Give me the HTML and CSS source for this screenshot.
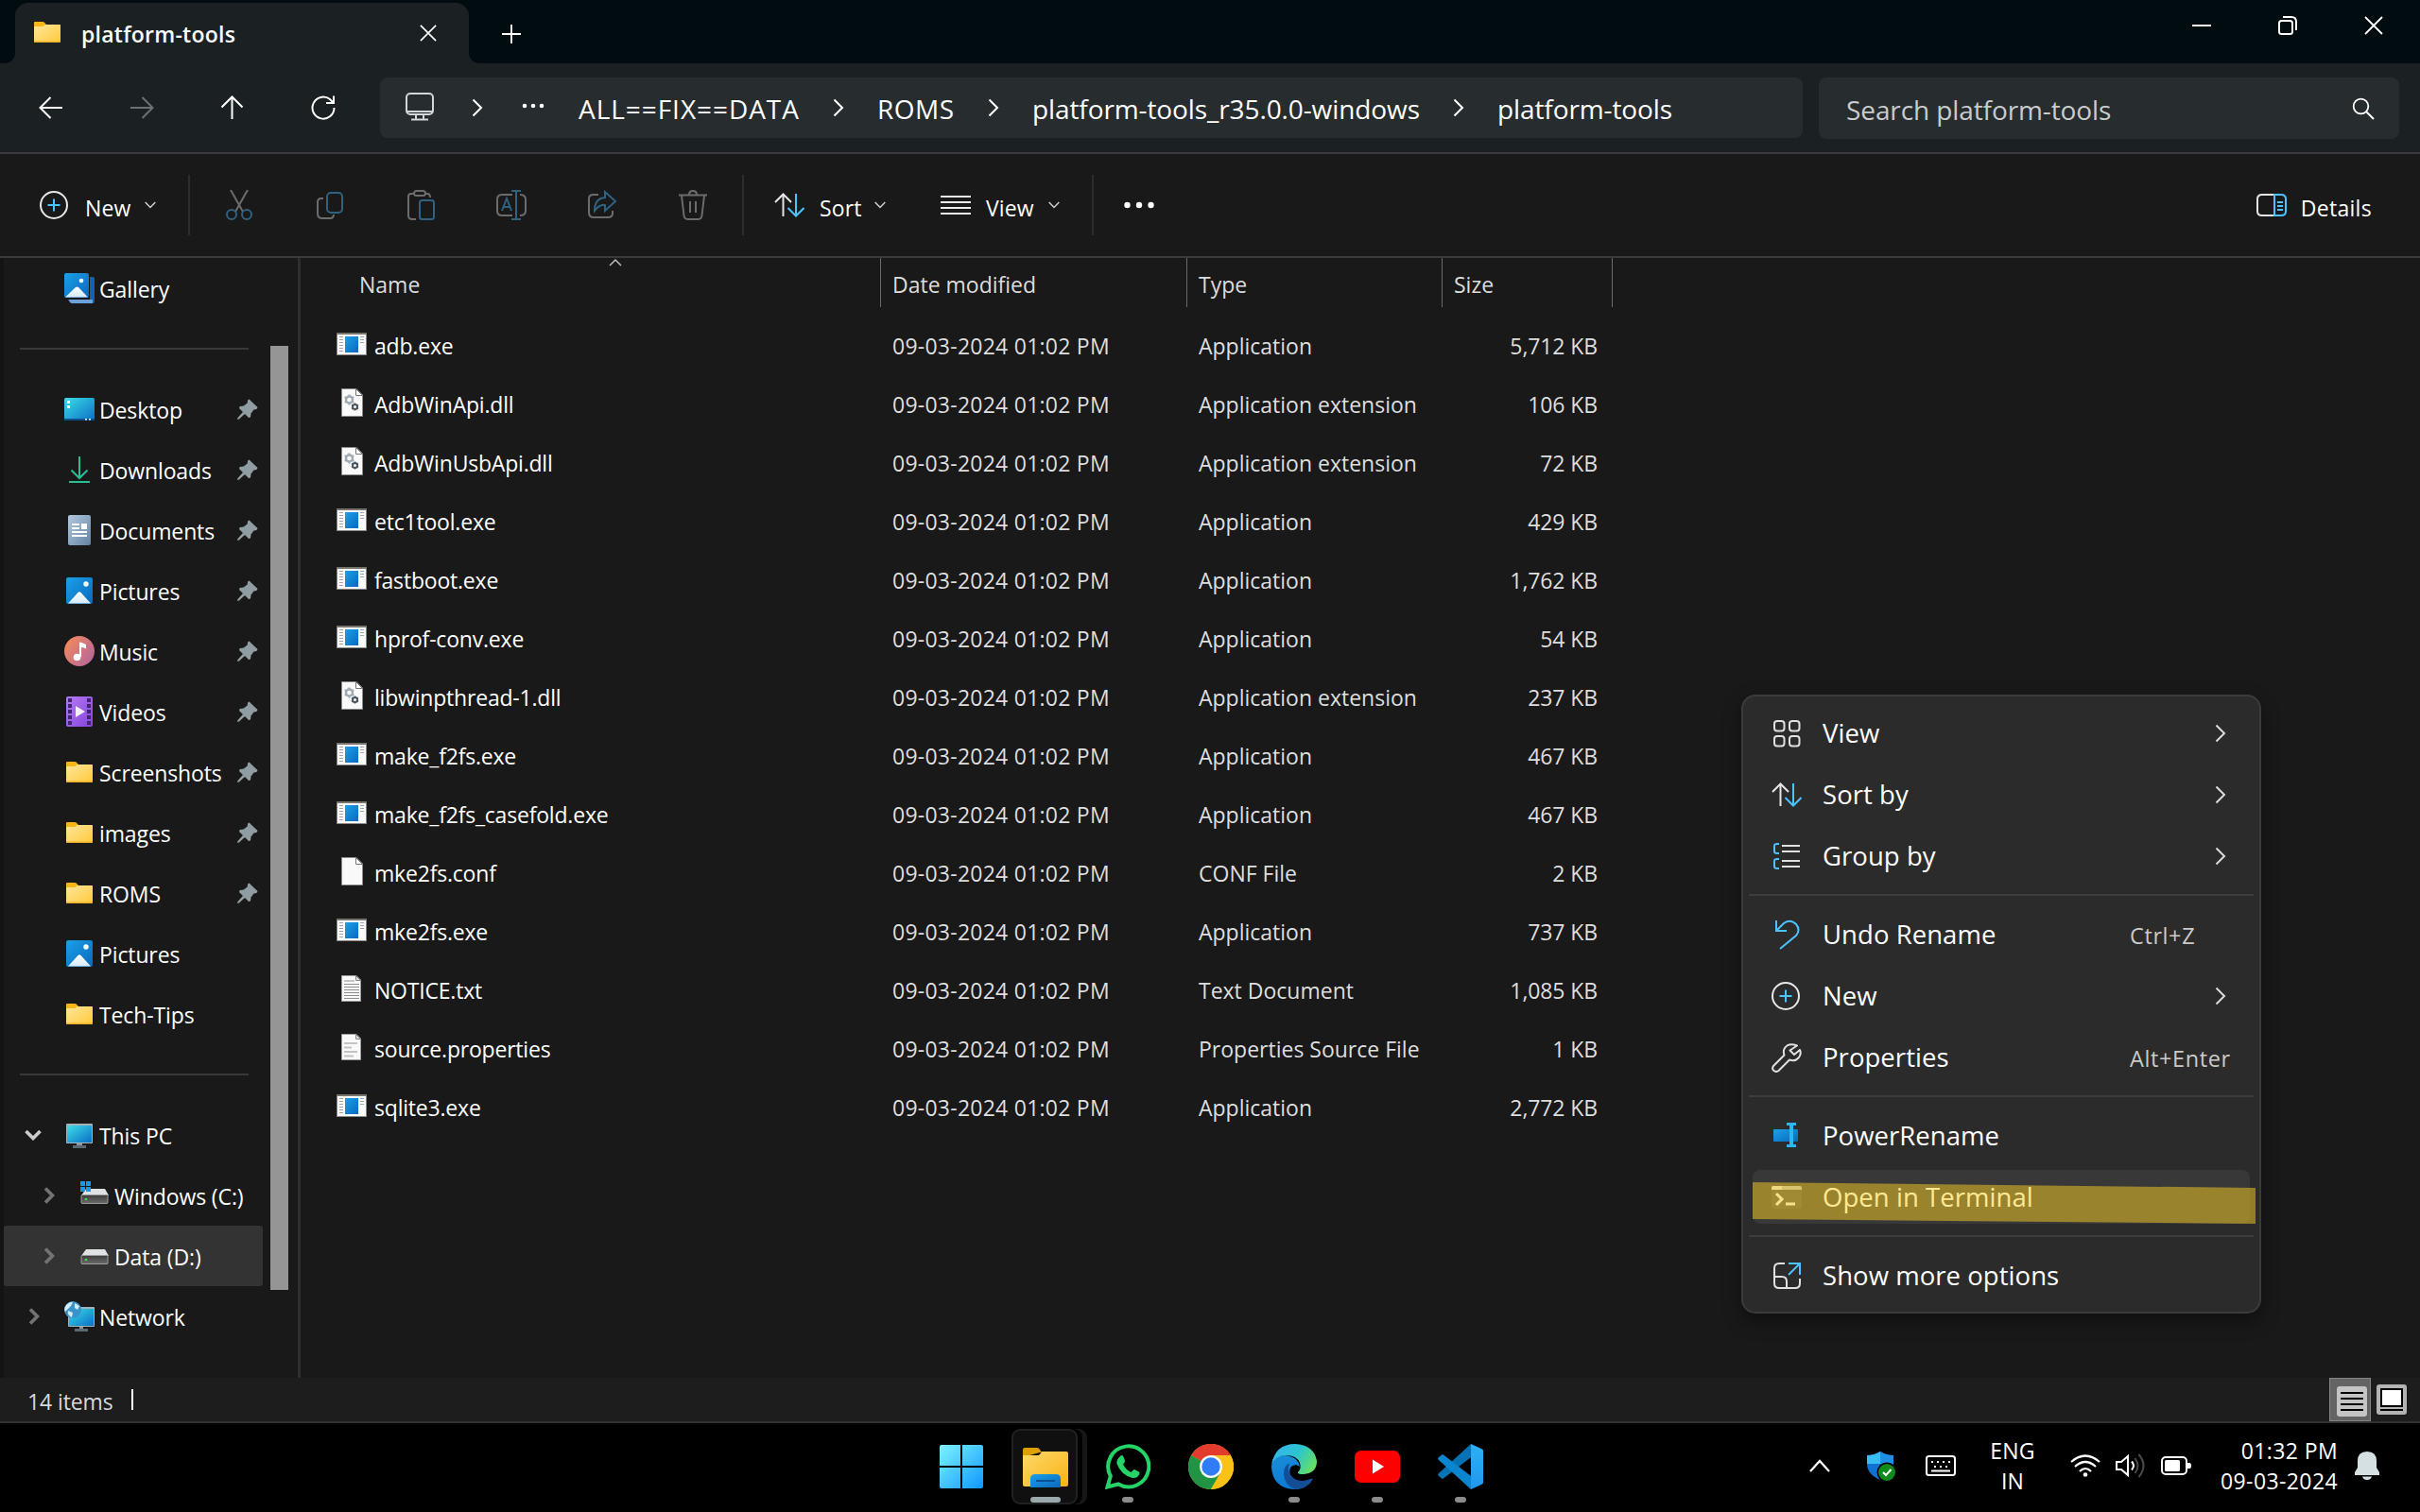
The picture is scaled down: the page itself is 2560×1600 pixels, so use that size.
FILE: index.html
```html
<!DOCTYPE html>
<html lang="en">
<head>
<meta charset="utf-8">
<title>platform-tools</title>
<link rel="stylesheet" href="styles.css">
</head>
<body>
<svg class="sprite" aria-hidden="true">
  <defs>
    <linearGradient id="gFolder" x1="0" y1="0" x2="1" y2="1"><stop offset="0" stop-color="#ffe79f"/><stop offset="1" stop-color="#ffc937"/></linearGradient>
    <linearGradient id="gBlue" x1="0" y1="0" x2="1" y2="1"><stop offset="0" stop-color="#1ba0e8"/><stop offset="1" stop-color="#0a68bd"/></linearGradient>
    <linearGradient id="gScreen" x1="0" y1="0" x2="1" y2="1"><stop offset="0" stop-color="#3ddde6"/><stop offset="1" stop-color="#0a6fc8"/></linearGradient>
    <linearGradient id="gSnow" x1="0" y1="0" x2="0" y2="1"><stop offset="0" stop-color="#fff"/><stop offset="1" stop-color="#d3e9fb"/></linearGradient>
    <linearGradient id="gDoc" x1="0" y1="0" x2="1" y2="1"><stop offset="0" stop-color="#b3c9de"/><stop offset="1" stop-color="#6583a6"/></linearGradient>
    <linearGradient id="gMusic" x1="0" y1="0.2" x2="1" y2="0.9"><stop offset="0" stop-color="#f48a5b"/><stop offset="1" stop-color="#b0649f"/></linearGradient>
    <linearGradient id="gVideo" x1="0" y1="0" x2="1" y2="1"><stop offset="0" stop-color="#b67bf2"/><stop offset="1" stop-color="#8442dc"/></linearGradient>
    <linearGradient id="gDrive" x1="0" y1="0" x2="0" y2="1"><stop offset="0" stop-color="#3c3c3c"/><stop offset="1" stop-color="#6b6b6b"/></linearGradient>
    <linearGradient id="gStart" x1="0" y1="0" x2="1" y2="1"><stop offset="0" stop-color="#7df4ff"/><stop offset="1" stop-color="#0f97ff"/></linearGradient>
    <linearGradient id="gBig" x1="0" y1="0" x2="1" y2="1"><stop offset="0" stop-color="#ffd96a"/><stop offset="1" stop-color="#f7b215"/></linearGradient>
    <linearGradient id="gEdgeTop" x1="0" y1="0.3" x2="1" y2="0.7"><stop offset="0" stop-color="#35b5ec"/><stop offset="0.5" stop-color="#2bc4cf"/><stop offset="1" stop-color="#6be25a"/></linearGradient>
    <linearGradient id="gEdgeMid" x1="0" y1="0" x2="0.5" y2="1"><stop offset="0" stop-color="#1b8fd8"/><stop offset="1" stop-color="#0b78d4"/></linearGradient>
    <linearGradient id="gCode" x1="0" y1="0" x2="0" y2="1"><stop offset="0" stop-color="#2cb0f5"/><stop offset="1" stop-color="#1f97ee"/></linearGradient>

    <symbol id="folder" viewBox="0 0 32 32"><path d="M2 6q0-1 1-1h8q2 0 3 2l1 1h13q2 0 2 1v4H2z" fill="#fbb615"/><path d="M2 10h9l3-2h15q1 0 1 1v16q0 2-1 2H3q-1 0-1-2z" fill="url(#gFolder)"/><path d="M2 25.500v.5q0 1 1 1h26q1 0 1-1v-.5z" fill="#eeb12a"/></symbol>
    <symbol id="picture" viewBox="0 0 32 32"><rect x="2" y="2" width="28" height="28" rx="2" fill="url(#gBlue)"/><path d="M4 29.500 14.500 18q1.500-1.500 3 0L28 29.500z" fill="url(#gSnow)"/><circle cx="23" cy="9" r="2.700" fill="#fff"/></symbol>
    <symbol id="gallery" viewBox="0 0 32 32"><path d="M6 27h21V4h3q2 0 2 2v24q0 2-2 2H8q-2 0-3-3z" fill="#1262b3"/><path d="M4 28h26v4H8q-2 0-3-3z" fill="#6aa2da"/><rect width="27" height="28" fill="#191919"/><rect width="26" height="26" rx="2" fill="url(#gBlue)"/><path d="M1 25.500 12 15q1.500-1 3 0l10 10.500z" fill="url(#gSnow)"/><circle cx="18" cy="8" r="2.300" fill="#fff"/></symbol>
    <symbol id="desktop" viewBox="0 0 32 32"><rect y="4" width="32" height="24" rx="1.500" fill="url(#gScreen)"/><path d="M0 26h32v.5q0 1.500-1.500 1.500h-29Q0 28 0 26.500z" fill="#0a4f8c"/><path d="M3 7h3v3H3zm0 5h3v3H3zM22 26h2v1.500h-2zm4 0h2v1.500h-2z" fill="#fff"/></symbol>
    <symbol id="download" viewBox="0 0 32 32"><g fill="none" stroke="#2dbd96" stroke-width="2"><path d="M16 2v23M7.500 16.500 16 25l8.500-8.500"/><path d="M5 29h22"/></g></symbol>
    <symbol id="document" viewBox="0 0 32 32"><rect x="4" width="24" height="32" rx="2" fill="url(#gDoc)"/><path d="M8 9h8v2H8zm0 4h8v2H8zm10-4h6v6h-6zM8 17h16v2H8zm0 4h16v2H8z" fill="#fff"/></symbol>
    <symbol id="music" viewBox="0 0 32 32"><circle cx="16" cy="16" r="16" fill="url(#gMusic)"/><circle cx="13.500" cy="22.500" r="3.800" fill="#fff"/><path d="M16 6.500q3 0 7 2.500v4.500q-3-2-5-1.500v10h-2z" fill="#fff"/></symbol>
    <symbol id="video" viewBox="0 0 32 32"><rect x="2" width="28" height="32" rx="2" fill="url(#gVideo)"/><path d="M4 2h4v4H4zm0 6h4v4H4zm0 6h4v4H4zm0 6h4v4H4zm0 6h4v4H4zM24 2h4v4h-4zm0 6h4v4h-4zm0 6h4v4h-4zm0 6h4v4h-4zm0 6h4v4h-4z" fill="#3f2470"/><path d="M12 10v12l10-6z" fill="#f3ecfd"/></symbol>
    <symbol id="pc" viewBox="0 0 32 32"><path d="M13 24h6v4h-6z" fill="#8a96a0"/><path d="M9 27h14v3H9z" fill="#5b6974"/><rect x="2" y="4" width="28" height="21" rx="1" fill="#a5b0b8"/><path d="M3 6h26v18H3z" fill="url(#gScreen)"/></symbol>
    <symbol id="drive" viewBox="0 0 32 32"><path d="M7 9h20l4 7H2z" fill="#dfe1e5"/><rect x="2" y="15.500" width="28" height="9" rx="1" fill="url(#gDrive)" stroke="#9c9c9c"/><circle cx="7" cy="20" r="1.300" fill="#35e342"/></symbol>
    <symbol id="osdrive" viewBox="0 0 32 32"><path d="M7 9h20l4 7H2z" fill="#dfe1e5"/><rect x="2" y="15.500" width="28" height="9" rx="1" fill="url(#gDrive)" stroke="#9c9c9c"/><circle cx="7" cy="20" r="1.300" fill="#35e342"/><path d="M1 1h5v5H1zm6 0h5v5H7zM1 7h5v5H1zm6 0h5v5H7z" fill="#1d97e8"/></symbol>
    <symbol id="network" viewBox="0 0 32 32"><path d="M16 27h4v3h-4z" fill="#8a96a0"/><path d="M11 29h14v3H11z" fill="#5b6974"/><rect x="4" y="6" width="28" height="21" rx="1" fill="#a5b0b8"/><path d="M5 8h26v18H5z" fill="url(#gScreen)"/><circle cx="9" cy="9" r="9" fill="#3b93cb"/><path d="M2 4q4-4 7-3l-2 4-4 4-2 2Q-1 8 2 4zm9-2 5 3-2 4-3-2zM4 10l5 2-1 5q-5-2-4-7z" fill="#d3edf8"/></symbol>
    <symbol id="pin" viewBox="0 0 22 22"><path d="M12.500 0.500 21.500 9l-1 2-3 .5-3 4-.5 4-2 .5-4-4L2 21.500 0 22l.5-2L6 14l-4-4 .7-2 4-.5 4-3L11 1.500z" fill="#929ca3"/></symbol>

    <symbol id="exe" viewBox="0 0 32 32"><rect x=".5" y="4.500" width="31" height="23" fill="#fafafa" stroke="#8a8884"/><path d="M0 4h32v2H0z" fill="#77746e"/><rect x="9" y="8" width="14" height="17" fill="url(#gBlue)"/><path d="M3 8.500h4M3 11.500h4M3 14.500h4M3 17.500h4M3 20.500h4M3 23.500h4M25 8.500h4M25 11.500h4M25 14.500h4" stroke="#a0a4a8" /></symbol>
    <symbol id="blank" viewBox="0 0 32 32"><path d="M5.500 1.500H21l6.500 6.500v22.500h-22z" fill="#f9f9f9" stroke="#8d8d8d"/><path d="M20.500 1.500v7h7z" fill="#fff" stroke="#777"/></symbol>
    <symbol id="dll" viewBox="0 0 32 32"><use href="#blank"/><circle cx="13.500" cy="13" r="3.500" fill="none" stroke="#9fabb4" stroke-width="2.500"/><path d="M13.500 7.500v11M8.700 10.200l9.600 5.600M8.700 15.800l9.600-5.600" stroke="#9fabb4" stroke-width="2"/><circle cx="13.500" cy="13" r="2.300" fill="#f9f9f9"/><circle cx="19.500" cy="20.500" r="2.500" fill="none" stroke="#4d565d" stroke-width="2"/><path d="M19.500 16.500v8M16 18.500l7 4M16 22.500l7-4" stroke="#4d565d" stroke-width="1.500"/><circle cx="19.500" cy="20.500" r="1.500" fill="#f9f9f9"/></symbol>
    <symbol id="txt" viewBox="0 0 32 32"><path d="M5.500 2.500H21l4.500 4.500v22.500h-20z" fill="#f9f9f9" stroke="#9d9d9d"/><path d="M20.500 2.500v5h5z" fill="#e2e2e2" stroke="#888"/><path d="M8 8h11M8 11.500h16M8 14.500h16M8 17.500h16M8 20.500h16M8 23.500h16M8 26.500h16" stroke="#8f8f8f"/></symbol>
    <symbol id="prop" viewBox="0 0 32 32"><path d="M5.500 2.500H21l4.500 4.500v22.500h-20z" fill="#f9f9f9" stroke="#9d9d9d"/><path d="M20.500 2.500v5h5z" fill="#e2e2e2" stroke="#888"/><path d="M8 12h14M8 16.500h8M8 21h14M8 25.500h10" stroke="#c3c3c3" stroke-width="2"/></symbol>

    <symbol id="chevR" viewBox="0 0 12 20"><path d="M1.500 1.500 10 10l-8.500 8.500" fill="none" stroke="currentColor" stroke-width="2"/></symbol>
    <symbol id="chevD" viewBox="0 0 12 8"><path d="M.7 1 6 6.500 11.300 1" fill="none" stroke="#cfcfcf" stroke-width="1.500"/></symbol>
    <symbol id="treeR" viewBox="0 0 12 18"><path d="M2 1.500 9.500 9 2 16.500" fill="none" stroke="currentColor" stroke-width="3.600"/></symbol>
    <symbol id="treeD" viewBox="0 0 18 12"><path d="M1.500 2 9 9.500 16.500 2" fill="none" stroke="currentColor" stroke-width="3.600"/></symbol>
    <symbol id="cross" viewBox="0 0 20 20"><path d="m1 1 18 18M19 1 1 19" fill="none" stroke="#fff" stroke-width="1.800"/></symbol>
    <symbol id="newi" viewBox="0 0 32 32"><circle cx="15" cy="16" r="14" fill="none" stroke="#e8e8e8" stroke-width="2"/><path d="M15 9.500v13M8.500 16h13" stroke="#4cc2ff" stroke-width="2"/></symbol>
    <symbol id="sort" viewBox="0 0 32 32"><path d="M9.500 28V5M1 13l8.500-8.500L18 13" fill="none" stroke="#e4e4e4" stroke-width="2"/><path d="M23 4v23M14.500 19l8.500 8.500 8.500-8.500" fill="none" stroke="#4cc2ff" stroke-width="2"/></symbol>
  </defs>
</svg>

<header class="titlebar">
  <div class="tab">
    <svg class="i32 tab-icon"><use href="#folder"/></svg>
    <span class="tab-title">platform-tools</span>
    <svg class="tab-close"><use href="#cross"/></svg>
  </div>
  <svg class="tab-new" viewBox="0 0 20 20"><path d="M10 0v20M0 10h20" stroke="#fff" stroke-width="1.800"/></svg>
  <div class="winctl">
    <svg viewBox="0 0 20 20"><path d="M0 10h20" stroke="#fff" stroke-width="2"/></svg>
    <svg viewBox="0 0 20 20"><rect x="1" y="5" width="14" height="14" rx="2.500" fill="none" stroke="#fff" stroke-width="2"/><path d="M5 1h9q5 0 5 5v9" fill="none" stroke="#fff" stroke-width="2"/></svg>
    <svg><use href="#cross"/></svg>
  </div>
</header>

<nav class="navbar">
  <div class="navbtns">
    <svg class="i32" viewBox="0 0 32 32"><path d="M28 16H5M15.500 5 4.500 16l11 11" fill="none" stroke="#fff" stroke-width="2"/></svg>
    <svg class="i32" viewBox="0 0 32 32"><path d="M4 16h23M16.500 5l11 11-11 11" fill="none" stroke="#6d7173" stroke-width="2"/></svg>
    <svg class="i32" viewBox="0 0 32 32"><path d="M15.500 28V5M4.500 15.500l11-11 11 11" fill="none" stroke="#fff" stroke-width="2"/></svg>
    <svg class="i32" viewBox="0 0 32 32"><path d="M27.500 16A11.500 11.500 0 1 1 23 7l3.500 3.500M27 3.500V11h-8" fill="none" stroke="#fff" stroke-width="2"/></svg>
  </div>
  <div class="address">
    <svg class="i32 monitor" viewBox="0 0 32 32"><g fill="none" stroke="#d3d6d7" stroke-width="2"><rect x="2" y="2" width="28" height="22" rx="4"/><path d="M2 21h28M12 25v4M20 25v4M7 29.500h18"/></g></svg>
    <svg class="crumb-sep first"><use href="#chevR"/></svg>
    <svg class="crumb-dots" viewBox="0 0 24 6"><g fill="#fff"><circle cx="3" cy="3" r="2.300"/><circle cx="12" cy="3" r="2.300"/><circle cx="21" cy="3" r="2.300"/></g></svg>
    <span class="crumb c-all">ALL==FIX==DATA</span><svg class="crumb-sep"><use href="#chevR"/></svg>
    <span class="crumb c-roms">ROMS</span><svg class="crumb-sep"><use href="#chevR"/></svg>
    <span class="crumb c-rel">platform-tools_r35.0.0-windows</span><svg class="crumb-sep"><use href="#chevR"/></svg>
    <span class="crumb">platform-tools</span>
  </div>
  <div class="search">
    <span>Search platform-tools</span>
    <svg viewBox="0 0 24 24"><circle cx="9.500" cy="9.500" r="7.800" fill="none" stroke="#fff" stroke-width="1.800"/><path d="m15 15 8 8" stroke="#fff" stroke-width="2"/></svg>
  </div>
</nav>

<div class="toolbar">
  <div class="tool t-new"><svg class="i32"><use href="#newi"/></svg><span>New</span><svg class="caret"><use href="#chevD"/></svg></div>
  <div class="tools-dim">
    <svg class="i32" viewBox="0 0 32 32" fill="none" stroke="#6c6c6c" stroke-width="2"><path d="M7 0l13 23M25 0 12 23"/><g stroke="#2f6280"><circle cx="8" cy="26" r="5"/><circle cx="24" cy="26" r="5"/></g></svg>
    <svg class="i32" viewBox="0 0 32 32" fill="none" stroke="#6c6c6c" stroke-width="2"><path d="M9 9H7q-4 0-4 4v12q0 5 5 5h8q4 0 4-4"/><rect x="13" y="3" width="16" height="21" rx="4" stroke="#2f6280"/></svg>
    <svg class="i32" viewBox="0 0 32 32" fill="none" stroke="#6c6c6c" stroke-width="2"><path d="M9 4H6Q3 4 3 7v20q0 4 4 4h4M21 4h2q3 0 3 4"/><rect x="9" y="1" width="12" height="5" rx="2.500"/><rect x="15" y="11" width="15" height="20" rx="2.500" stroke="#2f6280"/></svg>
    <svg class="i32" viewBox="0 0 32 32" fill="none" stroke="#6c6c6c" stroke-width="2"><path d="M17 5H6Q1 5 1 10v12q0 5 5 5h11M25 5q6 0 6 5v12q0 5-6 5"/><g stroke="#2f6280"><path d="M21 1v30M16 1h10M16 31h10M6 22l5-13 5 13M8 18h7"/></g></svg>
    <svg class="i32" viewBox="0 0 32 32" fill="none" stroke="#6c6c6c" stroke-width="2"><path d="M12 5H7Q2 5 2 9v15q0 5 5 5h15q5 0 5-4v-3"/><path d="M19 2v6q-11 1-11 14 5-7 11-6v6l11-10z" stroke="#2f6280"/></svg>
    <svg class="i32" viewBox="0 0 32 32" fill="none" stroke="#6c6c6c" stroke-width="2"><path d="M1 5.500h30M12 5q0-4 4-4t4 4M4 6l2.500 21q.5 4 4 4h11q3.500 0 4-4L28 6M13 12v12M19 12v12"/></svg>
  </div>
  <div class="tool t-sort"><svg class="i32"><use href="#sort"/></svg><span>Sort</span><svg class="caret"><use href="#chevD"/></svg></div>
  <div class="tool t-view"><svg class="i32" viewBox="0 0 32 32"><path d="M0 7h32M0 13h32M0 19h32M0 25h32" stroke="#ececec" stroke-width="2"/></svg><span>View</span><svg class="caret"><use href="#chevD"/></svg></div>
  <svg class="more" viewBox="0 0 32 8"><g fill="#fff"><circle cx="3.500" cy="4" r="3.200"/><circle cx="16" cy="4" r="3.200"/><circle cx="28.500" cy="4" r="3.200"/></g></svg>
  <div class="tool t-details"><svg class="i32" viewBox="0 0 32 32" fill="none" stroke-width="2"><path d="M19 5H6Q1 5 1 9.500v13Q1 27 6 27h13" stroke="#e4e4e4"/><path d="M19 5h7q5 0 5 4.500v13q0 4.500-5 4.500h-7zM22 13h6M22 17h6M22 21h6" stroke="#4cc2ff"/></svg><span>Details</span></div>
</div>

<main class="body">
  <aside class="side">
    <div class="tree">
      <div class="node"><svg class="i32"><use href="#gallery"/></svg><span>Gallery</span></div>
      <div class="rule"></div>
      <div class="node"><svg class="i32"><use href="#desktop"/></svg><span>Desktop</span><svg class="pin"><use href="#pin"/></svg></div>
      <div class="node"><svg class="i32"><use href="#download"/></svg><span>Downloads</span><svg class="pin"><use href="#pin"/></svg></div>
      <div class="node"><svg class="i32"><use href="#document"/></svg><span>Documents</span><svg class="pin"><use href="#pin"/></svg></div>
      <div class="node"><svg class="i32"><use href="#picture"/></svg><span>Pictures</span><svg class="pin"><use href="#pin"/></svg></div>
      <div class="node"><svg class="i32"><use href="#music"/></svg><span>Music</span><svg class="pin"><use href="#pin"/></svg></div>
      <div class="node"><svg class="i32"><use href="#video"/></svg><span>Videos</span><svg class="pin"><use href="#pin"/></svg></div>
      <div class="node"><svg class="i32"><use href="#folder"/></svg><span>Screenshots</span><svg class="pin"><use href="#pin"/></svg></div>
      <div class="node"><svg class="i32"><use href="#folder"/></svg><span>images</span><svg class="pin"><use href="#pin"/></svg></div>
      <div class="node"><svg class="i32"><use href="#folder"/></svg><span>ROMS</span><svg class="pin"><use href="#pin"/></svg></div>
      <div class="node"><svg class="i32"><use href="#picture"/></svg><span>Pictures</span></div>
      <div class="node"><svg class="i32"><use href="#folder"/></svg><span>Tech-Tips</span></div>
      <div class="rule"></div>
      <div class="node root"><svg class="twist open"><use href="#treeD"/></svg><svg class="i32"><use href="#pc"/></svg><span>This PC</span></div>
      <div class="node child"><svg class="twist"><use href="#treeR"/></svg><svg class="i32"><use href="#osdrive"/></svg><span>Windows (C:)</span></div>
      <div class="node child selected"><svg class="twist"><use href="#treeR"/></svg><svg class="i32"><use href="#drive"/></svg><span>Data (D:)</span></div>
      <div class="node root"><svg class="twist"><use href="#treeR"/></svg><svg class="i32"><use href="#network"/></svg><span>Network</span></div>
    </div>
    <div class="scroll"></div>
  </aside>
  <section class="files">
    <div class="head"><span class="h-name">Name<svg class="sorted" viewBox="0 0 14 8"><path d="M1 7 7 1l6 6" fill="none" stroke="#bbb" stroke-width="1.500"/></svg></span><span>Date modified</span><span>Type</span><span>Size</span></div>
    <div class="row"><svg class="i32"><use href="#exe"/></svg><span>adb.exe</span><span>09-03-2024 01:02 PM</span><span>Application</span><span>5,712 KB</span></div>
    <div class="row"><svg class="i32"><use href="#dll"/></svg><span>AdbWinApi.dll</span><span>09-03-2024 01:02 PM</span><span>Application extension</span><span>106 KB</span></div>
    <div class="row"><svg class="i32"><use href="#dll"/></svg><span>AdbWinUsbApi.dll</span><span>09-03-2024 01:02 PM</span><span>Application extension</span><span>72 KB</span></div>
    <div class="row"><svg class="i32"><use href="#exe"/></svg><span>etc1tool.exe</span><span>09-03-2024 01:02 PM</span><span>Application</span><span>429 KB</span></div>
    <div class="row"><svg class="i32"><use href="#exe"/></svg><span>fastboot.exe</span><span>09-03-2024 01:02 PM</span><span>Application</span><span>1,762 KB</span></div>
    <div class="row"><svg class="i32"><use href="#exe"/></svg><span>hprof-conv.exe</span><span>09-03-2024 01:02 PM</span><span>Application</span><span>54 KB</span></div>
    <div class="row"><svg class="i32"><use href="#dll"/></svg><span>libwinpthread-1.dll</span><span>09-03-2024 01:02 PM</span><span>Application extension</span><span>237 KB</span></div>
    <div class="row"><svg class="i32"><use href="#exe"/></svg><span>make_f2fs.exe</span><span>09-03-2024 01:02 PM</span><span>Application</span><span>467 KB</span></div>
    <div class="row"><svg class="i32"><use href="#exe"/></svg><span>make_f2fs_casefold.exe</span><span>09-03-2024 01:02 PM</span><span>Application</span><span>467 KB</span></div>
    <div class="row"><svg class="i32"><use href="#blank"/></svg><span>mke2fs.conf</span><span>09-03-2024 01:02 PM</span><span>CONF File</span><span>2 KB</span></div>
    <div class="row"><svg class="i32"><use href="#exe"/></svg><span>mke2fs.exe</span><span>09-03-2024 01:02 PM</span><span>Application</span><span>737 KB</span></div>
    <div class="row"><svg class="i32"><use href="#txt"/></svg><span>NOTICE.txt</span><span>09-03-2024 01:02 PM</span><span>Text Document</span><span>1,085 KB</span></div>
    <div class="row"><svg class="i32"><use href="#prop"/></svg><span>source.properties</span><span>09-03-2024 01:02 PM</span><span>Properties Source File</span><span>1 KB</span></div>
    <div class="row"><svg class="i32"><use href="#exe"/></svg><span>sqlite3.exe</span><span>09-03-2024 01:02 PM</span><span>Application</span><span>2,772 KB</span></div>
  </section>
</main>

<div class="status">
  <span>14 items</span><i class="bar"></i>
  <div class="modes">
    <div class="mode on"><svg class="i32" viewBox="0 0 32 32"><rect width="32" height="32" rx="3" fill="#c4c4c4"/><path d="M4 7h24M4 13h24M4 19h24M4 25h24" stroke="#000" stroke-width="2"/></svg></div>
    <svg class="i32 big" viewBox="0 0 32 32"><rect width="32" height="32" rx="3" fill="#b4b4b4"/><rect x="5" y="5" width="22" height="18" fill="#fff" stroke="#000" stroke-width="2"/><path d="M4 27h24" stroke="#000" stroke-width="2"/></svg>
  </div>
</div>

<footer class="taskbar">
  <div class="apps">
    <div class="app"><svg viewBox="0 0 48 48"><g fill="url(#gStart)"><path d="M3 1h20v22H1V3q0-2 2-2zM25 1h20q2 0 2 2v20H25zM1 25h22v22H3q-2 0-2-2zM25 25h22v20q0 2-2 2H25z"/></g></svg></div>
    <div class="app active"><svg viewBox="0 0 48 48"><path d="M0 6q0-2 2-2h13q2 0 3 2l2 3h-2L0 14z" fill="#dfa006"/><path d="M0 12h16q2 0 4-4h26q2 0 2 2v33q0 2-2 2H2q-2 0-2-2z" fill="url(#gBig)"/><path d="M8 46V37q0-5 5-5h22q5 0 5 5v9z" fill="url(#gBlue)"/><path d="M14 39h20" stroke="#084f94" stroke-width="2"/></svg><i class="ind wide"></i></div>
    <div class="app"><svg viewBox="0 0 48 48"><path d="M2.500 45.500 5.800 34A21.500 21.500 0 1 1 14 42.500z" fill="none" stroke="#25d366" stroke-width="4"/><path d="M16 13q1-1.500 3-.5l2 5q.5 1.500-2 4 3 6 8.500 8.500 2.500-3 3.500-3l5 2.500q1 .5 0 3-2 4-7 3.500Q17 33 12.500 21q-.5-5 3.500-8z" fill="#25d366"/></svg><i class="ind"></i></div>
    <div class="app"><svg viewBox="0 0 48 48"><circle cx="24" cy="24" r="24" fill="#fbc116"/><path d="M24 24 3.200 12A24 24 0 0 1 44.800 12z" fill="#e33b2e"/><path d="M24 24 3.200 12A24 24 0 0 0 24 48L34.400 30z" fill="#219345"/><path d="M24 12h20.800A24 24 0 0 1 24 48l10.400-18z" fill="#fbc116"/><circle cx="24" cy="24" r="12" fill="#fff"/><circle cx="24" cy="24" r="9.700" fill="#2f7cf6"/></svg></div>
    <div class="app"><svg viewBox="0 0 48 48"><path d="M0 24Q1 12 14 12q14 1 16 12l-4-2q-9 1-6 11 3 11 15 9 5-1 8-4-7 11-20 10Q1 46 0 24z" fill="url(#gEdgeMid)"/><path d="M13 32q0-9 6-12-3 10 3 15 7 6 16 3 5-2 6-1-5 10-19 11-11-4-12-16z" fill="#124d96"/><path d="M0 22Q4 0 25 0q20 1 23 18 0 13-14 14-7 0-6-2 4-4 2-10-3-8-15-8Q4 12 0 22z" fill="url(#gEdgeTop)"/></svg><i class="ind"></i></div>
    <div class="app"><svg viewBox="0 0 48 48"><rect y="7" width="48" height="34" rx="7" fill="#f00"/><path d="M19 16.500v15L31 24z" fill="#fff"/></svg><i class="ind"></i></div>
    <div class="app"><svg viewBox="0 0 48 48"><path d="M0 33q0-1 1-2L35 0v14L6 36.500q-1 .5-2 0z" fill="#0572b5"/><path d="M0 15q0 1 1 2l34 31V34L6 11.500q-1-.5-2 0z" fill="#0a86d1"/><path d="M35 0l12 5.500q1 .5 1 2v33q0 1.500-1 2L35 48z" fill="url(#gCode)"/></svg><i class="ind"></i></div>
  </div>
  <div class="tray">
    <svg class="up" viewBox="0 0 22 14"><path d="M1 13 11 2l10 11" fill="none" stroke="#fff" stroke-width="2.200"/></svg>
    <svg class="i32 shield" viewBox="0 0 32 32"><path d="M14 1q6 4 14 4v9q0 11-14 17Q0 25 0 14V5q8 0 14-4z" fill="#0d72d1"/><path d="M14 1v13H0V5q8 0 14-4z" fill="#38bdf2"/><path d="M14 1q6 4 14 4v9H14z" fill="#1f8fe3"/><circle cx="21" cy="23" r="10.500" fill="#000"/><circle cx="21" cy="23" r="9" fill="#0f8a1c"/><path d="m17 23 3 3 5.500-6" fill="none" stroke="#fff" stroke-width="2"/></svg>
    <svg class="i32 kbd" viewBox="0 0 32 32"><rect x="1" y="6" width="30" height="20" rx="2.500" fill="none" stroke="#fff" stroke-width="2"/><path d="M6 12h2m4 0h2m4 0h2m4 0h2M9 17h2m4 0h2m4 0h2M6 21.500h20" stroke="#fff" stroke-width="2"/></svg>
    <div class="lang">ENG<br>IN</div>
    <svg class="i32 wifi" viewBox="0 0 32 32" fill="none" stroke="#fff" stroke-width="2.200"><path d="M1 12q15-13 30 0M5 17q11-10 22 0M10 22q6-6 12 0"/><circle cx="16" cy="25.500" r="2.300" fill="#fff" stroke="none"/></svg>
    <svg class="i32 vol" viewBox="0 0 32 32" fill="none" stroke="#fff" stroke-width="2"><path d="M1 12v8h5l7 6V6l-7 6z"/><path d="M17 11.500q4 4.500 0 9"/><path d="M20.500 8q6 8 0 16M24.500 4q10 12 0 24" stroke="#4a4a4a"/></svg>
    <svg class="i32 bat" viewBox="0 0 32 32"><rect x="1" y="7" width="26" height="18" rx="4" fill="none" stroke="#fff" stroke-width="2"/><rect x="4" y="10" width="16" height="12" rx="1.500" fill="#fff"/><path d="M28 13h2q2 0 2 3t-2 3h-2z" fill="#fff"/></svg>
    <div class="clock">01:32 PM<br>09-03-2024</div>
    <svg class="bell" viewBox="0 0 26 30"><path d="M13 0q10 0 10 10v7l3 5v3H0v-3l3-5v-7Q3 0 13 0zM8 26.500h10q-1 3.500-5 3.500t-5-3.500z" fill="#d5e0e3"/></svg>
  </div>
</footer>

<div class="menu">
  <div class="item"><svg class="i32" viewBox="0 0 32 32" fill="none" stroke="#e0e0e0" stroke-width="2"><rect x="3" y="3" width="10.500" height="10.500" rx="3"/><rect x="19" y="3" width="10.500" height="10.500" rx="3"/><rect x="3" y="19" width="10.500" height="10.500" rx="3"/><rect x="19" y="19" width="10.500" height="10.500" rx="3"/></svg><span>View</span><svg class="sub"><use href="#chevR"/></svg></div>
  <div class="item"><svg class="i32"><use href="#sort"/></svg><span>Sort by</span><svg class="sub"><use href="#chevR"/></svg></div>
  <div class="item"><svg class="i32" viewBox="0 0 32 32" fill="none" stroke-width="2"><path d="M8 3H6Q3 3 3 5v6q0 2 3 2h2M8 19H6q-3 0-3 2v6q0 2 3 2h2" stroke="#4cc2ff"/><path d="M11 5h19M11 11h19M11 21h19M11 27h19" stroke="#e0e0e0"/></svg><span>Group by</span><svg class="sub"><use href="#chevR"/></svg></div>
  <div class="line"></div>
  <div class="item"><svg class="i32" viewBox="0 0 32 32"><path d="M5 1v11h11M5 12l8-8q7-5 13 1 5 6 0 12L9 31" fill="none" stroke="#4cc2ff" stroke-width="2"/></svg><span>Undo Rename</span><span class="key">Ctrl+Z</span></div>
  <div class="item"><svg class="i32"><use href="#newi"/></svg><span>New</span><svg class="sub"><use href="#chevR"/></svg></div>
  <div class="item"><svg class="i32" viewBox="0 0 32 32"><path d="M27 3.500Q18 0 14 6q-2 3-.5 7.500L2 25q-2 3 .5 5t5 0L19 18.500q6 2 9.500-2T30 8l-6 5-4.500-4.500z" fill="none" stroke="#e0e0e0" stroke-width="2" stroke-linejoin="round"/></svg><span>Properties</span><span class="key">Alt+Enter</span></div>
  <div class="line"></div>
  <div class="item"><svg class="i32" viewBox="0 0 32 32"><rect x="2" y="9" width="26" height="13" rx="1" fill="url(#gBlue)"/><path d="M16 2h10v3h-3v20h3v3H16v-3h3V5h-3z" fill="#2cb7f0"/></svg><span>PowerRename</span></div>
  <div class="item hover"><svg class="i32" viewBox="0 0 32 32"><rect y="4" width="32" height="24" rx="2" fill="#454545"/><path d="M0 8V6q0-2 2-2h28q2 0 2 2v2z" fill="#b5b5b5"/><path d="M0 8V6q0-2 2-2h9v4z" fill="#ddd"/><path d="m5 12 6 6-6 6M15 23h10" fill="none" stroke="#f0f0f0" stroke-width="3"/></svg><span>Open in Terminal</span></div>
  <div class="line"></div>
  <div class="item"><svg class="i32" viewBox="0 0 32 32" fill="none" stroke-width="2"><path d="M14 3H8Q3 3 3 8v16q0 5 5 5h17q5 0 5-5v-5M3 17h8q5 0 5 5v7" stroke="#e0e0e0"/><path d="M18 3h12v12M30 3 18 15" stroke="#4cc2ff"/></svg><span>Show more options</span></div>
  <svg class="marker" viewBox="0 0 532 46"><path d="M0 0 532 6v38L0 39z" fill="#ffd322" fill-opacity=".49"/></svg>
</div>
</body>
</html>
```
FILE: styles.css
```css
* { box-sizing: border-box; }
body {
  margin: 0; width: 2560px; height: 1600px; overflow: hidden; position: relative;
  display: flex; flex-direction: column;
  background: #191919; color: #fff;
  font: 23px/32px "Open Sans", "Noto Sans", sans-serif;
}
svg { display: block; flex: none; }
span { white-space: nowrap; }
.sprite { position: absolute; width: 0; height: 0; }
.i32 { width: 32px; height: 32px; }

/* title bar */
.titlebar { height: 67px; flex: none; background: #000c10; display: flex; align-items: flex-start; padding-left: 16px; }
.tab { width: 480px; height: 64px; margin-top: 3px; background: #1b2022; border-radius: 14px 14px 0 0; display: flex; align-items: center; position: relative; }
.tab::before, .tab::after { content: ""; position: absolute; bottom: 0; width: 10px; height: 10px; }
.tab::before { left: -10px; background: radial-gradient(circle at 0 0, transparent 9.5px, #1b2022 10px); }
.tab::after { right: -10px; background: radial-gradient(circle at 100% 0, transparent 9.5px, #1b2022 10px); }
.tab-icon { margin: -3px 0 0 18px; }
.tab-title { margin-left: 20px; padding-top: 2px; width: 358px; font-weight: 600; letter-spacing: .25px; }
.tab-close { width: 18px; height: 18px; margin-top: -1px; }
.tab-new { width: 20px; height: 20px; margin: 26px 0 0 35px; }
.winctl { margin: 17px 39px 0 auto; display: flex; gap: 71px; }
.winctl svg { width: 20px; height: 20px; }

/* navigation */
.navbar { height: 96px; flex: none; background: #1b2022; border-bottom: 2px solid #3a3a3c; display: flex; align-items: flex-start; padding-top: 15px; font-size: 28px; }
.navbtns { width: 402px; height: 64px; padding-left: 38px; display: flex; align-items: center; gap: 64px; }
.address { width: 1505px; height: 64px; border-radius: 8px; background: #272d2f; display: flex; align-items: center; padding-left: 26px; }
.monitor { margin-top: -2px; }
.crumb-sep { width: 12px; height: 20px; margin-right: 35px; flex: none; }
.crumb-sep.first { margin: 0 41px 0 39px; }
.crumb-dots { width: 24px; height: 6px; margin: -4px 36px 0 0; }
.crumb { letter-spacing: -.1px; padding-top: 1px; }
.c-all { width: 269px; letter-spacing: .95px; }
.c-roms { width: 117px; letter-spacing: .5px; }
.c-rel { width: 445px; }
.search { width: 614px; height: 65px; margin-left: 17px; border-radius: 8px; background: #272d2f; color: #c9cbcc; display: flex; align-items: center; justify-content: space-between; padding: 2px 26px 0 29px; letter-spacing: -.1px; }
.search svg { width: 24px; height: 24px; margin-top: -2px; }

/* command bar */
.toolbar { height: 110px; flex: none; border-bottom: 2px solid #3a3a3c; display: flex; align-items: center; }
.tool { display: flex; align-items: center; height: 64px; }
.tool span { padding-top: 5px; letter-spacing: .1px; }
.caret { width: 12px; height: 8px; }
.t-new { width: 201px; padding-left: 42px; border-right: 2px solid #2d2d2d; }
.t-new span { margin-left: 16px; width: 63px; }
.tools-dim { width: 586px; height: 64px; padding-left: 36px; display: flex; align-items: center; gap: 64px; border-right: 2px solid #2d2d2d; }
.t-sort { padding-left: 32px; width: 208px; }
.t-sort span { margin-left: 16px; width: 58px; }
.t-view { width: 162px; border-right: 2px solid #2d2d2d; }
.t-view span { margin-left: 16px; width: 66px; }
.more { width: 32px; height: 8px; margin-left: 32px; }
.t-details { margin: 0 51px 0 auto; }
.t-details span { margin-left: 15px; letter-spacing: .3px; }

/* body */
.body { height: 1185px; flex: none; display: flex; }
.side { width: 318px; margin-right: 1px; display: flex; border-left: 4px solid #141414; border-right: 3px solid #2f2f2f; }
.tree { width: 274px; flex: none; }
.node { height: 64px; display: flex; align-items: center; padding-left: 64px; letter-spacing: -.12px; }
.node span { margin-left: 5px; padding-top: 2px; }
.node.selected { background: #333; border-radius: 3px; }
.node.root, .node.child { padding-left: 22px; }
.twist { width: 12px; height: 18px; color: #737373; margin: 0 26px 0 4px; }
.twist.open { width: 18px; height: 12px; color: #cdcdcd; margin: 0 24px 0 0; }
.child .twist { margin: 0 24px 0 20px; }
.child .i32 { margin-left: 2px; }
.child span { margin-left: 5px; }
.pin { width: 22px; height: 22px; margin: 0 5px 0 auto; }
.rule { height: 64px; padding: 31px 15px 0 17px; }
.rule::after { content: ""; display: block; height: 2px; background: #393939; }
.scroll { width: 19px; height: 999px; margin: 93px 0 0 8px; background: #959595; }

.files { flex: 1; }
.head { height: 52px; display: grid; grid-template-columns: 613px 324px 270px 180px; color: #dcdcdc; margin-bottom: 10px; }
.head span { padding: 12px 0 0 12px; border-right: 1px solid #6a6a6a; }
.head .h-name { padding-left: 61px; display: flex; justify-content: space-between; }
.sorted { width: 14px; height: 8px; margin: -11px 273px 0 0; }
.row { height: 62px; display: grid; grid-template-columns: 32px 548px 324px 270px 162px; padding-left: 37px; align-items: center; color: #dedede; }
.row .i32 { margin-top: -4px; }
.row span:nth-child(2) { color: #fff; padding-left: 8px; letter-spacing: -.2px; }
.row span:nth-child(3), .row span:nth-child(4) { padding-left: 8px; }
.row span:nth-child(3) { letter-spacing: .25px; }
.row span:nth-child(5) { text-align: right; padding-right: 2px; letter-spacing: -.1px; }

/* status bar */
.status { height: 48px; flex: none; background: #1d1d1d; border-bottom: 2px solid #313131; display: flex; padding-left: 29px; align-items: flex-start; color: #d9d9d9; letter-spacing: -.1px; }
.status > span { width: 110px; padding-top: 9px; }
.bar { width: 2px; height: 22px; background: #fff; margin-top: 12px; }
.modes { margin: 0 14px 0 auto; display: flex; gap: 6px; }
.mode { width: 44px; height: 46px; border: 1px solid #868686; background: #646464; padding: 8px 0 0 7px; }
.big { margin-top: 7px; }

/* taskbar */
.taskbar { height: 94px; flex: none; background: #000; display: flex; justify-content: flex-end; }
.apps { width: 600px; margin-right: 332px; display: flex; gap: 18px; padding-top: 6px; }
.app { width: 70px; height: 80px; flex: none; display: flex; flex-direction: column; align-items: center; padding-top: 16px; }
.app svg { width: 48px; height: 48px; }
.active { background: #101010; border: 2px solid #202020; border-radius: 9px; padding-top: 14px; padding-left: 1px; box-shadow: 5px 0 0 #000, 10px 0 0 #171717; }
.ind { width: 12px; height: 6px; border-radius: 3px; background: #8a8a8a; margin-top: 8px; }
.wide { width: 32px; background: #9ca8ac; }
.tray { display: flex; padding: 15px 43px 0 0; align-items: center; height: 74px; line-height: 32px; }
.up { width: 22px; height: 14px; margin-right: 39px; }
.shield, .kbd { margin-right: 30px; }
.lang { width: 60px; text-align: center; margin-right: 31px; letter-spacing: .2px; }
.wifi, .vol { margin-right: 16px; }
.clock { text-align: right; width: 155px; margin-right: 18px; letter-spacing: .4px; }
.bell { width: 26px; height: 30px; }

/* context menu */
.menu { position: absolute; left: 1842px; top: 735px; width: 550px; height: 655px; background: #2b2b2b; border: 2px solid #3b3b3b; border-radius: 15px; padding: 6px; font-size: 27.5px; letter-spacing: .05px; box-shadow: 0 8px 20px rgba(0,0,0,.4); }
.item { height: 65px; display: flex; align-items: center; padding-left: 24px; position: relative; }
.item > svg, .item > span { position: relative; }
.item > span:nth-of-type(1) { margin-left: 22px; padding-top: 1px; }
.item.hover::before { content: ""; position: absolute; left: 4px; right: 4px; top: 4px; bottom: 4px; background: #383838; border-radius: 8px; }
.item .sub { width: 12px; height: 20px; margin: 0 29px 0 auto; color: #dcdcdc; }
.item .key { font-size: 23.5px; letter-spacing: .6px; color: #cacaca; margin-left: auto; width: 131px; padding-top: 3px; }
.line { height: 18px; padding-top: 8px; }
.line::after { content: ""; display: block; height: 2px; background: #3d3d3d; }
.marker { position: absolute; left: 10px; top: 514px; width: 532px; height: 46px; }
```
